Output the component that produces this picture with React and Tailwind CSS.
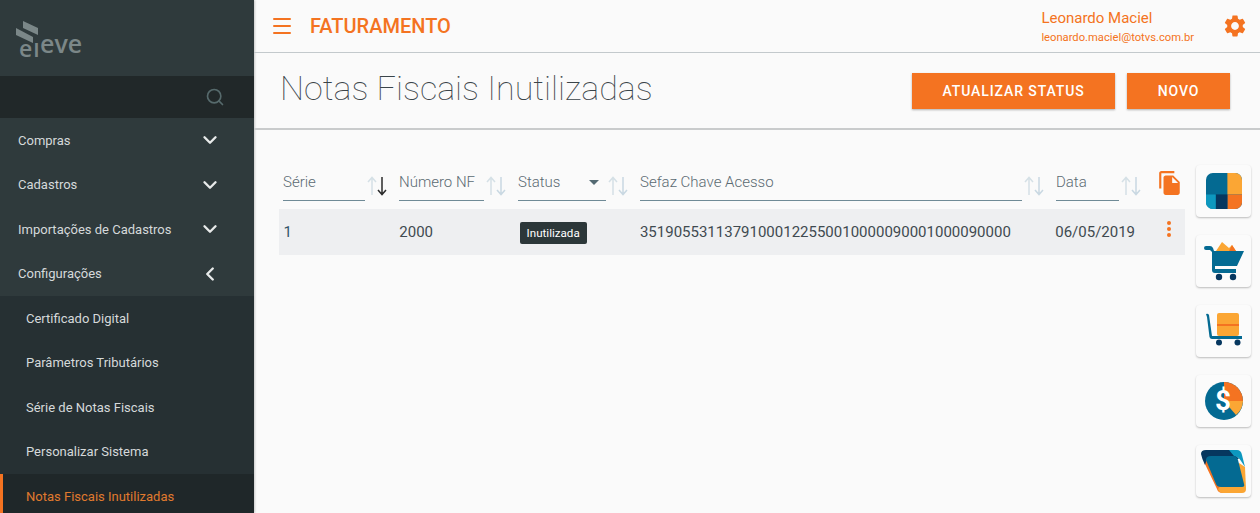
import { ChevronDown, ChevronLeft, Search, Menu } from 'lucide-react';

function MenuItem({ label, open }) {
  return (
    <div className="h-[44.5px] shrink-0 flex items-center justify-between pl-[18px] pr-[33px] text-[13px] text-[#d5d9da]">
      <span>{label}</span>
      {open ? <ChevronLeft size={22} strokeWidth={2.6} color="#e8eaea" /> : <ChevronDown size={22} strokeWidth={2.6} color="#e8eaea" />}
    </div>
  );
}

function SubItem({ label, active }) {
  return (
    <div
      className={
        active
          ? 'h-[44.5px] flex items-center pl-[23px] text-[13px] text-[#e07a2e] bg-[#1f2729] border-l-[3px] border-[#f47321]'
          : 'h-[44.5px] flex items-center pl-[26px] text-[13px] text-[#d5d9da]'
      }
    >
      {label}
    </div>
  );
}

function SortIcons({ active }) {
  return (
    <svg width="21" height="22" viewBox="0 0 21 22" fill="none" strokeWidth="1.5" className="shrink-0">
      <path d="M6 20V3M2 7l4-4.5L10 7" stroke="#d5e0e6" />
      <path d="M16 2v17M12 15l4 4.5L20 15" stroke={active ? '#2b2b2b' : '#c9d8e2'} />
    </svg>
  );
}

function HeaderCell({ label, width, sortActive, caret }) {
  return (
    <div className="flex items-center h-[40px]" style={{ width }}>
      <div className="flex-1 h-[36px] border-b border-[#6f8a96] flex items-center justify-between text-[15px] font-light text-[#5b6a72] whitespace-nowrap">
        <span>{label}</span>
        {caret && <span className="mr-[7px] w-0 h-0 border-l-[5px] border-r-[5px] border-t-[5px] border-l-transparent border-r-transparent border-t-[#546a72]" />}
      </div>
      <span className="ml-[1px] mr-[12px] mt-[6px]">
        <SortIcons active={sortActive} />
      </span>
    </div>
  );
}

function RailCard({ children }) {
  return (
    <div className="w-[55px] h-[52px] bg-[#fbfbfb] rounded-[4px] shadow-[0_1px_2px_rgba(0,0,0,0.25)] flex items-center justify-center">
      {children}
    </div>
  );
}

export default function App() {
  return (
    <div className="w-[1260px] h-[513px] overflow-hidden flex bg-[#fafafa] font-['Roboto',sans-serif]">
      {/* sidebar */}
      <aside className="w-[254px] shrink-0 bg-[#2f3a3c] flex flex-col overflow-hidden shadow-[1px_0_2px_rgba(0,0,0,0.2)]">
        <div className="h-[76px] shrink-0 flex items-start pl-[15px] pt-[20px]">
          <svg width="72" height="48" viewBox="0 0 72 48">
            <text x="4" y="37" fontFamily="Open Sans, sans-serif" fontSize="23" fontWeight="600" letterSpacing="1" fill="#7b8788">el</text>
            <rect x="0" y="14" width="26" height="9" fill="#2f3a3c" />
            <path d="M8 1 L23 8 L23 15 L8 8 Z" fill="#7b8788" />
            <path d="M1 8 L18 17 L18 23 L1 15 Z" fill="#7b8788" />
            <text x="25" y="33" fontFamily="Open Sans, sans-serif" fontSize="25" fontWeight="600" fill="#7b8788">eve</text>
          </svg>
        </div>
        <div className="h-[42px] shrink-0 bg-[#212829] flex items-center justify-end pr-[29px]">
          <Search size={20} strokeWidth={2} color="#566a6c" />
        </div>
        <MenuItem label="Compras" />
        <MenuItem label="Cadastros" />
        <MenuItem label="Importações de Cadastros" />
        <MenuItem label="Configurações" open />
        <div className="bg-[#263033] flex-1 shrink-0">
          <SubItem label="Certificado Digital" />
          <SubItem label="Parâmetros Tributários" />
          <SubItem label="Série de Notas Fiscais" />
          <SubItem label="Personalizar Sistema" />
          <SubItem label="Notas Fiscais Inutilizadas" active />
        </div>
      </aside>

      <div className="flex-1 flex flex-col min-w-0">
        {/* topbar */}
        <header className="h-[53px] border-b border-[#c3c9cc] flex items-center pl-[16px] pr-[12px] shrink-0">
          <Menu size={24} strokeWidth={2} color="#f47321" />
          <h2 className="ml-[16px] text-[20px] font-medium text-[#f47321]">FATURAMENTO</h2>
          <div className="ml-auto mr-[28px] text-[#f47321]">
            <div className="text-[15px] leading-[18px] mt-[2px]">Leonardo Maciel</div>
            <div className="text-[11.2px] leading-[14px] mt-[4px]">leonardo.maciel@totvs.com.br</div>
          </div>
          <svg width="26" height="26" viewBox="0 0 24 24" fill="#f47321">
            <path d="M19.14 12.94c.04-.3.06-.61.06-.94 0-.32-.02-.64-.07-.94l2.03-1.58a.49.49 0 0 0 .12-.61l-1.92-3.32a.488.488 0 0 0-.59-.22l-2.39.96c-.5-.38-1.03-.7-1.62-.94l-.36-2.54a.484.484 0 0 0-.48-.41h-3.84c-.24 0-.43.17-.47.41l-.36 2.54c-.59.24-1.13.57-1.62.94l-2.39-.96c-.22-.08-.47 0-.59.22L2.74 8.87c-.12.21-.08.47.12.61l2.03 1.58c-.05.3-.09.63-.09.94s.02.64.07.94l-2.03 1.58a.49.49 0 0 0-.12.61l1.92 3.32c.12.22.37.29.59.22l2.39-.96c.5.38 1.03.7 1.62.94l.36 2.54c.05.24.24.41.48.41h3.84c.24 0 .44-.17.47-.41l.36-2.54c.59-.24 1.13-.56 1.62-.94l2.39.96c.22.08.47 0 .59-.22l1.92-3.32c.12-.22.07-.47-.12-.61l-2.01-1.58zM12 15.6c-1.98 0-3.6-1.62-3.6-3.6s1.62-3.6 3.6-3.6 3.6 1.62 3.6 3.6-1.62 3.6-3.6 3.6z" />
          </svg>
        </header>

        {/* title row */}
        <div className="h-[77px] border-b-2 border-[#c9cbcc] flex items-start pl-[26px] pr-[30px] shrink-0">
          <h1 className="mt-[14px] text-[34px] leading-[42px] font-thin text-[#3a4449]">Notas Fiscais Inutilizadas</h1>
          <div className="ml-auto mt-[20px] flex gap-[12px]">
            <button className="w-[203px] h-[36px] bg-[#f47321] text-white text-[14px] font-medium tracking-[0.9px] shadow-[0_1px_2px_rgba(0,0,0,0.3)]">ATUALIZAR STATUS</button>
            <button className="w-[103px] h-[36px] bg-[#f47321] text-white text-[14px] font-medium tracking-[0.9px] shadow-[0_1px_2px_rgba(0,0,0,0.3)]">NOVO</button>
          </div>
        </div>

        {/* content */}
        <div className="flex-1 flex pl-[25px] pr-[9px]">
          <div className="w-[906px] pt-[32px]">
            <div className="flex pl-[4px] h-[41px] items-end">
              <HeaderCell label="Série" width={116} sortActive />
              <HeaderCell label="Número NF" width={119} />
              <HeaderCell label="Status" width={122} caret />
              <HeaderCell label="Sefaz Chave Acesso" width={416} />
              <HeaderCell label="Data" width={97} />
              <svg className="ml-[4px] mb-[7px]" width="26" height="26" viewBox="0 0 24 24" fill="#f47321">
                <path d="M16 1H4c-1.1 0-2 .9-2 2v14h2V3h12V1zm-1 4 6 6v10c0 1.1-.9 2-2 2H7.99C6.89 23 6 22.1 6 21l.01-14c0-1.1.89-2 1.99-2h7zm-1 7h5.5L14 6.5V12z" />
              </svg>
            </div>
            <div className="mt-[6px] h-[46px] bg-[#eeeff1] flex items-center pl-[4.5px] text-[15px] text-[#3f4a50]">
              <div className="w-[116px] text-[#33556a]">1</div>
              <div className="w-[119px]">2000</div>
              <div className="w-[122px]">
                <span className="ml-[1.5px] inline-block bg-[#2c3739] text-white text-[11.6px] leading-[22px] h-[22px] px-[7px] rounded-[2px]">Inutilizada</span>
              </div>
              <div className="w-[416px] whitespace-nowrap">35190553113791000122550010000090001000090000</div>
              <div className="w-[94px] whitespace-nowrap">06/05/2019</div>
              <div className="w-[36px] flex justify-end">
                <div className="flex flex-col gap-[2px] mr-[14px] mb-[6px]">
                  <span className="w-[4px] h-[4px] rounded-full bg-[#f47321]" />
                  <span className="w-[4px] h-[4px] rounded-full bg-[#f47321]" />
                  <span className="w-[4px] h-[4px] rounded-full bg-[#f47321]" />
                </div>
              </div>
            </div>
          </div>

          {/* right rail */}
          <div className="ml-auto pt-[35px] flex flex-col gap-[18px]">
            <RailCard>
              <svg width="36" height="36" viewBox="0 0 37 37">
                <rect width="37" height="37" rx="7" fill="#046a92" />
                <path d="M22 0h8a7 7 0 0 1 7 7v15H22z" fill="#fba634" />
                <path d="M22 22h15v8a7 7 0 0 1-7 7h-8z" fill="#f47321" />
                <rect x="10" y="22" width="12" height="15" fill="#06375f" />
                <path d="M0 22h10v15H7a7 7 0 0 1-7-7z" fill="#0d98bf" />
              </svg>
            </RailCard>
            <RailCard>
              <svg width="40" height="39" viewBox="0 0 40 39">
                <path d="M12 9 L18 0 L25 6 L28 3 L32 9 Z" fill="#fba634" />
                <path d="M25 9 L28 3 L32 9 Z" fill="#f47321" />
                <path d="M0 6 Q0 4 2 4 H6 Q8 4 9 6 L10 9 H40 L33 24 H11 V27 H32 V31 H11 Q8 31 8 28 V10 L6 8 H2 Q0 8 0 6 Z" fill="#046a92" />
                <circle cx="15" cy="35" r="3.2" fill="#06375f" />
                <circle cx="29" cy="35" r="3.2" fill="#06375f" />
              </svg>
            </RailCard>
            <RailCard>
              <svg width="36" height="36" viewBox="0 0 36 36">
                <rect x="11" y="0" width="22" height="23" rx="2" fill="#fba634" />
                <rect x="11" y="11" width="22" height="2" fill="#f47321" />
                <path d="M0 1 Q2 0 3 2 L6 23 H36 V26 H6 Q4 26 3.5 24 L1 4 Z" fill="#046a92" />
                <circle cx="13" cy="29.5" r="3" fill="#06375f" />
                <circle cx="31.5" cy="29.5" r="3" fill="#06375f" />
              </svg>
            </RailCard>
            <RailCard>
              <svg width="38" height="38" viewBox="0 0 38 38">
                <circle cx="19" cy="19" r="19" fill="#046a92" />
                <path d="M19 19 V0 A19 19 0 0 1 38 19 Z" fill="#f47321" />
                <path d="M19 19 H38 A19 19 0 0 1 31 33 Z" fill="#fba634" />
                <text x="18" y="28" textAnchor="middle" fontFamily="Roboto, sans-serif" fontSize="28" fontWeight="700" fill="#fff">$</text>
              </svg>
            </RailCard>
            <RailCard>
              <svg width="45" height="45" viewBox="0 0 45 45">
                <path d="M3 13 L16 40 Q17 44 22 44 H30 L8 10 Z" fill="#f47321" />
                <path d="M38 14 L44 18 L45 40 Q45 44 41 44 H22 Q18 44 17 40 Z" fill="#fba634" />
                <path d="M0 5 Q0 1 5 1 H30 L38 10 H6 L4 16 Q1 10 0 5 Z" fill="#06375f" />
                <path d="M28 1 H36 Q40 1 41 6 L44 18 L40 12 Q38 8 33 7 Z" fill="#0d98bf" />
                <path d="M5 11 Q5 7 10 7 H32 Q36 7 37 11 L43 35 Q44 38 41 38 H20 Q16 38 15 35 Z" fill="#046a92" />
              </svg>
            </RailCard>
          </div>
        </div>
      </div>
    </div>
  );
}
